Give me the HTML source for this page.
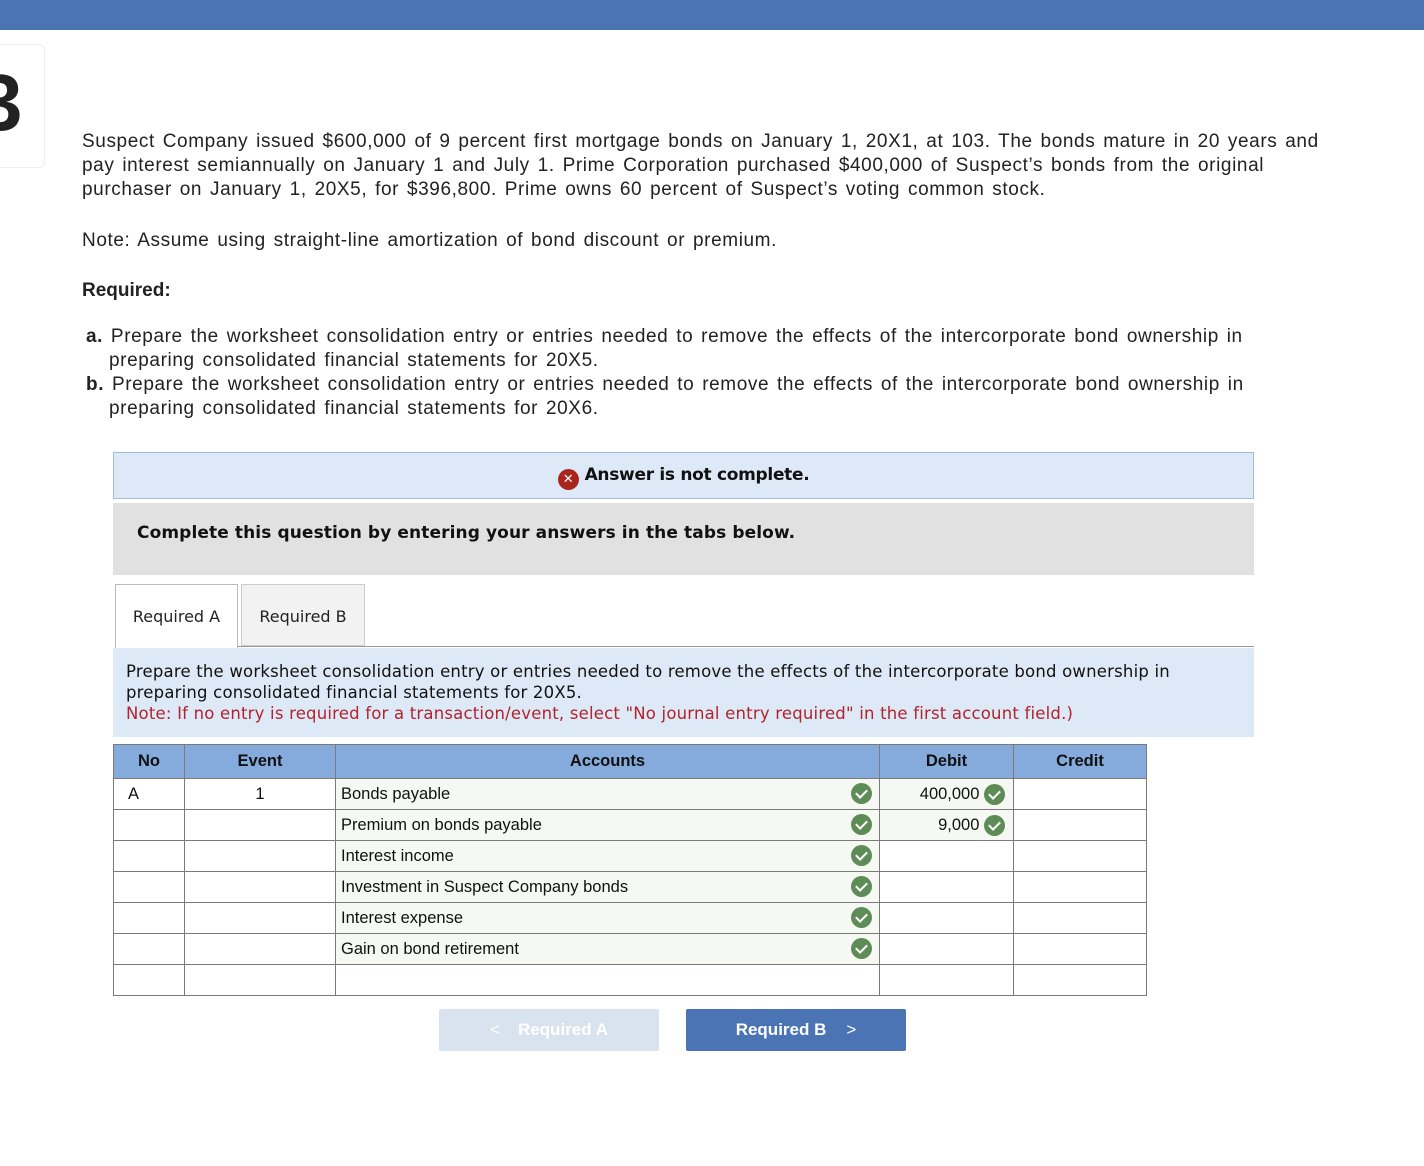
<!DOCTYPE html>
<html><head><style>
body{margin:0;width:1424px;height:1166px;background:#fff;position:relative;font-family:"Liberation Sans",sans-serif;color:#222;overflow:hidden}
.abs{position:absolute}
.p{left:82px;font-size:19px;line-height:24px;color:#222;letter-spacing:0.6px;word-spacing:2px}
.v{font-family:"DejaVu Sans",Verdana,sans-serif}
table{border-collapse:collapse;position:absolute;left:113px;top:744px;font-size:16.5px;color:#111}
td,th{border:1px solid #7a7a7a;padding:0 5px;height:31px;box-sizing:border-box}
th{background:#85abdd;height:34px;font-weight:bold}
.acc{background:#f6f8f3;position:relative}
.ck{display:inline-block;width:21px;height:21px;border-radius:50%;background:#5e8c56;vertical-align:middle;position:relative}
.ck:after{content:"";position:absolute;left:7px;top:4px;width:5px;height:9px;border:solid #fff;border-width:0 2px 2px 0;transform:rotate(45deg)}
.acc .ck.r{position:absolute;right:7px;top:4px}
</style></head><body>
<div class="abs" style="left:0;top:0;width:1424px;height:30px;background:#4a74b4"></div>
<div class="abs" style="left:-10px;top:44px;width:53px;height:122px;border:1px solid #eee;border-radius:6px"></div>
<div class="abs" style="left:-22px;top:58px;font-size:80px;font-weight:bold;color:#222;line-height:90px">3</div>
<div class="abs p" style="top:130px;width:1240px">Suspect Company issued $600,000 of 9 percent first mortgage bonds on January 1, 20X1, at 103. The bonds mature in 20 years and pay interest semiannually on January 1 and July 1. Prime Corporation purchased $400,000 of Suspect’s bonds from the original purchaser on January 1, 20X5, for $396,800. Prime owns 60 percent of Suspect’s voting common stock.</div>
<div class="abs p" style="top:229px">Note: Assume using straight-line amortization of bond discount or premium.</div>
<div class="abs p" style="top:279px;font-weight:bold;letter-spacing:0;word-spacing:0">Required:</div>
<div class="abs p" style="top:325px;left:86px;width:1185px;padding-left:23px;text-indent:-23px"><b>a.</b> Prepare the worksheet consolidation entry or entries needed to remove the effects of the intercorporate bond ownership in preparing consolidated financial statements for 20X5.</div>
<div class="abs p" style="top:373px;left:86px;width:1185px;padding-left:23px;text-indent:-23px"><b>b.</b> Prepare the worksheet consolidation entry or entries needed to remove the effects of the intercorporate bond ownership in preparing consolidated financial statements for 20X6.</div>
<div class="abs v" style="left:113px;top:452px;width:1139px;height:45px;background:#dde9f7;border:1px solid #9dbbe3;text-align:center;line-height:45px;font-size:17px;font-weight:bold;color:#111;letter-spacing:-0.3px"><span style="display:inline-block;width:21px;height:21px;border-radius:50%;background:#a8261e;color:#fff;font-size:13px;line-height:21px;vertical-align:-3px;margin-right:6px;margin-left:0">✕</span>Answer is not complete.</div>
<div class="abs v" style="left:113px;top:503px;width:1141px;height:72px;background:#e1e1e1;font-size:17px;font-weight:bold;color:#111;box-sizing:border-box;padding:20px 0 0 24px;letter-spacing:0.1px">Complete this question by entering your answers in the tabs below.</div>
<div class="abs v" style="left:115px;top:584px;width:123px;height:64px;border:1px solid #bbb;border-bottom:none;background:#fff;font-size:16px;text-align:center;line-height:64px;box-sizing:border-box">Required A</div>
<div class="abs v" style="left:241px;top:584px;width:124px;height:62px;border:1px solid #ccc;background:#f2f2f2;font-size:16px;text-align:center;line-height:64px;box-sizing:border-box">Required B</div>
<div class="abs" style="left:238px;top:646px;width:1016px;height:1px;background:#999"></div>
<div class="abs v" style="left:113px;top:648px;width:1141px;height:89px;background:#dde9f7;box-sizing:border-box;padding:13px 13px;font-size:16.5px;line-height:21px;color:#111;letter-spacing:0.2px"><div style="width:1090px">Prepare the worksheet consolidation entry or entries needed to remove the effects of the intercorporate bond ownership in preparing consolidated financial statements for 20X5.</div><span style="color:#b2232a">Note: If no entry is required for a transaction/event, select "No journal entry required" in the first account field.)</span></div>
<table>
<tr><th style="width:71px">No</th><th style="width:151px">Event</th><th style="width:544px">Accounts</th><th style="width:134px">Debit</th><th style="width:133px">Credit</th></tr>
<tr><td style="padding-left:14px">A</td><td style="text-align:center">1</td><td class="acc">Bonds payable<span class="ck r"></span></td><td class="acc" style="text-align:right;padding-right:8px">400,000 <span class="ck"></span></td><td></td></tr>
<tr><td></td><td></td><td class="acc">Premium on bonds payable<span class="ck r"></span></td><td class="acc" style="text-align:right;padding-right:8px">9,000 <span class="ck"></span></td><td></td></tr>
<tr><td></td><td></td><td class="acc">Interest income<span class="ck r"></span></td><td></td><td></td></tr>
<tr><td></td><td></td><td class="acc">Investment in Suspect Company bonds<span class="ck r"></span></td><td></td><td></td></tr>
<tr><td></td><td></td><td class="acc">Interest expense<span class="ck r"></span></td><td></td><td></td></tr>
<tr><td></td><td></td><td class="acc">Gain on bond retirement<span class="ck r"></span></td><td></td><td></td></tr>
<tr><td></td><td></td><td></td><td></td><td></td></tr>
</table>
<div class="abs" style="left:439px;top:1009px;width:220px;height:42px;background:#d9e3ef;border-radius:2px;color:#fff;font-weight:bold;font-size:17px;line-height:42px;text-align:center"><span style="font-weight:normal;margin-right:18px">&lt;</span>Required A</div>
<div class="abs" style="left:686px;top:1009px;width:220px;height:42px;background:#4a74b4;border-radius:2px;color:#fff;font-weight:bold;font-size:17px;line-height:42px;text-align:center">Required B<span style="font-weight:normal;margin-left:20px">&gt;</span></div>
</body></html>
